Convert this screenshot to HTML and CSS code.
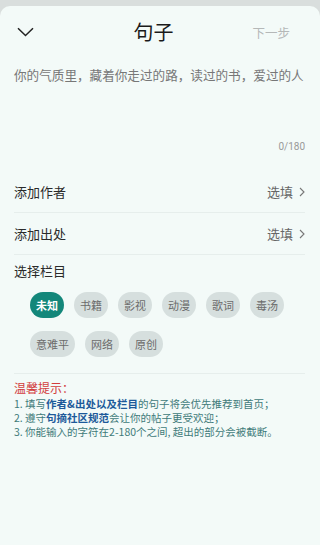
FILE: index.html
```html
<!DOCTYPE html>
<html lang="zh-CN">
<head>
    <meta charset="UTF-8">
    <meta name="viewport" content="width=device-width, initial-scale=1.0">
    <title>句子</title>
    <link rel="stylesheet" href="styles.css">
</head>
<body>
    <div class="sheet">
        <div class="header">
            <div class="back">
                <svg width="17" height="10" viewBox="0 0 17 10">
                    <path d="M1 1.2 L8.5 8.5 L16 1.2" fill="none" stroke="#222" stroke-width="1.5"/>
                </svg>
            </div>
            <h1 class="title">句子</h1>
            <div class="next">下一步</div>
        </div>

        <div class="editor">
            <div class="placeholder">你的气质里，藏着你走过的路，读过的书，爱过的人</div>
            <div class="count">0/180</div>
        </div>

        <div class="field">
            <span class="field-label">添加作者</span>
            <span class="field-value">选填
                <svg width="6" height="10" viewBox="0 0 6 10"><path d="M1 1 L5 5 L1 9" fill="none" stroke="#777" stroke-width="1.1"/></svg>
            </span>
        </div>
        <div class="field">
            <span class="field-label">添加出处</span>
            <span class="field-value">选填
                <svg width="6" height="10" viewBox="0 0 6 10"><path d="M1 1 L5 5 L1 9" fill="none" stroke="#777" stroke-width="1.1"/></svg>
            </span>
        </div>

        <div class="columns">
            <div class="field-label">选择栏目</div>
            <div class="chips">
                <span class="chip active">未知</span>
                <span class="chip">书籍</span>
                <span class="chip">影视</span>
                <span class="chip">动漫</span>
                <span class="chip">歌词</span>
                <span class="chip">毒汤</span>
                <span class="chip">意难平</span>
                <span class="chip">网络</span>
                <span class="chip">原创</span>
            </div>
        </div>

        <div class="tips">
            <div class="tips-title">温馨提示：</div>
            <ol class="tips-list">
                <li>1. 填写<b>作者&amp;出处以及栏目</b>的句子将会优先推荐到首页；</li>
                <li>2. 遵守<b>句摘社区规范</b>会让你的帖子更受欢迎；</li>
                <li>3. 你能输入的字符在2-180个之间, 超出的部分会被截断。</li>
            </ol>
        </div>
    </div>
</body>
</html>
```

FILE: styles.css
```css
body {
    margin: 0;
    background-color: #d9dedd;
    font-family: "Noto Sans CJK SC", "Noto Sans", sans-serif;
    height: 545px;
    overflow: hidden;
}
.sheet {
    margin-top: 6px;
    height: 539px;
    background-color: #f3faf8;
    border-radius: 10px 10px 0 0;
}
.header {
    display: grid;
    grid-template-columns: 1fr auto 1fr;
    align-items: center;
    height: 52px;
    padding: 0 30px 0 17px;
}
.back {
    display: flex;
    align-items: center;
}
.title {
    margin: 0;
    font-size: 20px;
    font-weight: 400;
    color: #1a1a1a;
    line-height: 26px;
}
.next {
    justify-self: end;
    font-size: 12.5px;
    color: #b5b8b8;
}
.editor {
    padding: 8px 15px 17px 14px;
}
.placeholder {
    font-size: 12.6px;
    line-height: 18px;
    color: #777;
    white-space: nowrap;
}
.count {
    margin-top: 56px;
    text-align: right;
    font-family: Roboto, "Noto Sans", sans-serif;
    font-size: 10px;
    line-height: 14px;
    color: #999;
}
.field {
    display: flex;
    justify-content: space-between;
    align-items: center;
    height: 41px;
    margin: 0 15px 0 14px;
    border-bottom: 1px solid #e6eeec;
}
.field-label {
    font-size: 13px;
    line-height: 18px;
    color: #2a2a2a;
}
.field-value {
    display: flex;
    align-items: center;
    gap: 6px;
    font-size: 13px;
    color: #666;
}
.columns {
    margin: 0 15px 0 14px;
    padding: 7px 0 16px;
    border-bottom: 1px solid #e6eeec;
}
.chips {
    display: flex;
    flex-wrap: wrap;
    gap: 13px 10px;
    padding-left: 16px;
    margin-top: 12px;
}
.chip {
    height: 26px;
    line-height: 26px;
    padding: 0 6px;
    min-width: 22px;
    text-align: center;
    border-radius: 13px;
    background-color: #d6dfde;
    color: #6b6b6b;
    font-size: 11px;
}
.chip.active {
    background-color: #13877a;
    color: #fff;
    font-weight: bold;
}
.tips {
    padding: 6px 14px 0;
}
.tips-title {
    font-size: 12px;
    line-height: 16px;
    color: #d23c3c;
}
.tips-list {
    list-style: none;
    margin: 1px 0 0;
    padding: 0;
    font-size: 10.5px;
    line-height: 14px;
    color: #3f7b7a;
}
.tips-list b {
    color: #1d5a9a;
    font-weight: 600;
}
```
